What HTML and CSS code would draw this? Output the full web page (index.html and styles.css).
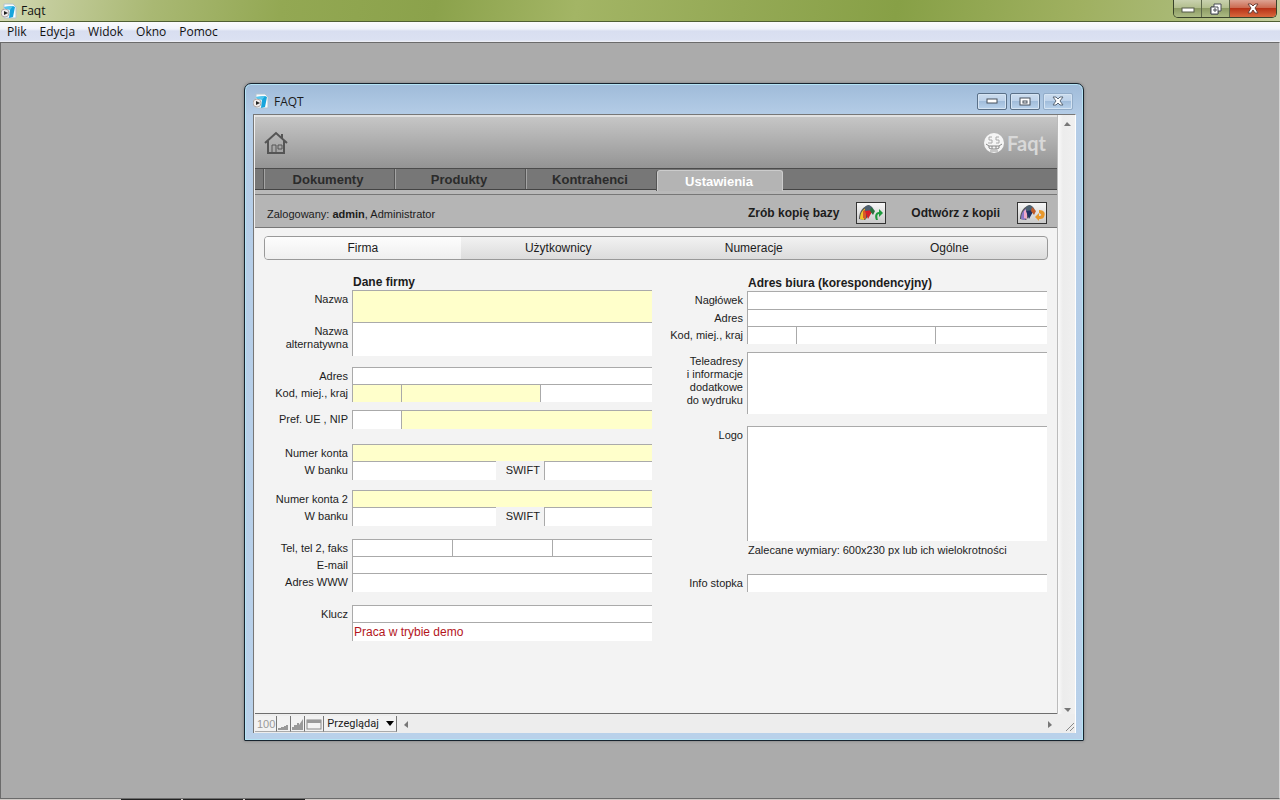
FILE: index.html
```
<!DOCTYPE html>
<html lang="pl">
<head>
    <meta charset="UTF-8">
    <meta name="viewport" content="width=device-width, initial-scale=1.0">
    <title>Faqt</title>
    <link rel="stylesheet" href="styles.css">
</head>
<body>

<svg class="defs" width="0" height="0" aria-hidden="true">
    <symbol id="app-icon" viewBox="0 0 16 16">
        <path d="M3 1h9l3 3v11H3z" fill="#fbfdfe" stroke="#b3c4cf"/>
        <path d="M3 4l9-1 2 1-2 10-4 1 1-9z" fill="#18a5dc"/>
        <path d="M3 4l9-1-3 4-5-1z" fill="#54c7ee"/>
        <circle cx="4" cy="10" r="4" fill="#f1eded" stroke="#b0a9a9"/>
        <path d="M3 8l4 2-4 2z" fill="#222"/>
    </symbol>
    <symbol id="umbrella" viewBox="0 0 28 20">
        <path d="M2 16C2 9 6 3 12 2c3 2 4 5 3 7L8 17z" fill="#555"/>
        <path d="M3 16C3 9 7 5 10 5L7 17z" fill="var(--side)"/>
        <path d="M6 8l3-2v10l-3-1z" fill="var(--mid)"/>
        <path d="M8 4c4-3 8-1 9 4H8z" fill="#4d6172"/>
        <path d="M8 8l8-1-5 9z" fill="var(--front)"/>
        <path d="M14 4l4 4-2 4-3-4z" fill="var(--tip)"/>
    </symbol>
</svg>

<header class="titlebar">
    <svg class="app-icon" width="16" height="16"><use href="#app-icon"/></svg>
    <span class="titlebar-text">Faqt</span>
    <div class="main-controls">
        <button class="main-min" aria-label="Minimalizuj"><svg width="14" height="6"><rect x="1" y="1" width="12" height="4" fill="#fff" stroke="#555b48"/></svg></button>
        <button class="main-max" aria-label="Przywróć"><svg width="12" height="12"><path d="M4 1h7v7H8v3H1V4h3z" fill="#fff" stroke="#4b4f56"/><path d="M1 4h7v7H1zM4 6h2v2H4z" fill="#fff" stroke="#4b4f56"/></svg></button>
        <button class="main-close" aria-label="Zamknij"><svg width="12" height="11"><path d="M1 1h3l2 2 2-2h3L8 5l3 5H8L6 7l-2 3H1l3-5z" fill="#fff" stroke="#6c4038"/></svg></button>
    </div>
</header>

<nav class="menubar">
    <button>Plik</button>
    <button>Edycja</button>
    <button>Widok</button>
    <button>Okno</button>
    <button>Pomoc</button>
</nav>

<main class="workspace">
    <section class="window">
        <header class="window-title">
            <svg class="app-icon" width="16" height="16"><use href="#app-icon"/></svg>
            <h1>FAQT</h1>
            <div class="window-controls">
                <button aria-label="Minimalizuj okno"><svg width="12" height="6"><rect x="1" y="1" width="10" height="4" fill="#fff" stroke="#47505c"/></svg></button>
                <button aria-label="Maksymalizuj okno"><svg width="12" height="9"><rect x="1" y="1" width="10" height="7" fill="#fff" stroke="#47505c"/><rect x="4" y="4" width="4" height="2" fill="#fff" stroke="#47505c"/></svg></button>
                <button class="dim" aria-label="Zamknij okno"><svg width="12" height="10"><path d="M1 1h3l2 2 2-2h3L8 5l3 4H8L6 7 4 9H1l3-4z" fill="#fff" stroke="#5b6878"/></svg></button>
            </div>
        </header>

        <div class="client">
            <div class="panel">
                <div class="banner">
                    <button class="home" aria-label="Start">
                        <svg width="24" height="24" viewBox="0 0 24 24" fill="none" stroke="#555" stroke-width="2">
                            <path d="M1 12L12 2l11 10M4 10v12h16V10M18 8V3"/>
                            <path d="M8 22v-8h4v8M14 14h4v4h-4z" stroke-width="1"/>
                        </svg>
                    </button>
                    <div class="brand">
                        <svg width="22" height="22" viewBox="0 0 22 22">
                            <circle cx="11" cy="11" r="10" fill="#f5f5f5"/>
                            <path d="M9 5H6v3h3v3H5M16 5h-3v3h3v3h-3" fill="none" stroke="#aaa"/>
                            <path d="M3 12l3 2h10l3-2M6 14v2l2 1h6l2-1v-2M9 14v3M13 14v3" fill="none" stroke="#888"/>
                            <path d="M7 19h8" stroke="#999"/>
                        </svg>
                        <span>Faqt</span>
                    </div>
                </div>

                <nav class="tabs">
                    <button>Dokumenty</button>
                    <button>Produkty</button>
                    <button>Kontrahenci</button>
                    <button class="active">Ustawienia</button>
                </nav>

                <div class="toolbar">
                    <p>Zalogowany: <b>admin</b>, Administrator</p>
                    <label for="backup">Zrób kopię bazy</label>
                    <button id="backup" class="tool backup">
                        <svg width="28" height="20" viewBox="0 0 28 20"><use href="#umbrella"/><path d="M19 17c-2-5 0-8 3-8V6l4 4-4 4v-3c-2 0-2 3-1 6z" fill="#1d9a3c"/></svg>
                    </button>
                    <label for="restore">Odtwórz z kopii</label>
                    <button id="restore" class="tool restore">
                        <svg width="28" height="20" viewBox="0 0 28 20"><use href="#umbrella"/><path d="M21 7c5 0 7 3 5 7-1 2-3 2-5 2v2l-4-4 4-4v3c3 0 3-2 0-3z" fill="#e8982c"/></svg>
                    </button>
                </div>

                <nav class="subtabs">
                    <button class="active">Firma</button>
                    <button>Użytkownicy</button>
                    <button>Numeracje</button>
                    <button>Ogólne</button>
                </nav>

                <form class="form">
                    <div class="company">
                        <h2>Dane firmy</h2>
                        <div class="group loose">
                            <div class="row tall">
                                <label for="name">Nazwa</label>
                                <textarea id="name" class="required"></textarea>
                            </div>
                            <div class="row tall">
                                <label for="alt-name">Nazwa<br>alternatywna</label>
                                <textarea id="alt-name"></textarea>
                            </div>
                        </div>
                        <div class="group near">
                            <div class="row">
                                <label for="address">Adres</label>
                                <input id="address" type="text">
                            </div>
                            <div class="row place">
                                <label for="zip">Kod, miej., kraj</label>
                                <input id="zip" type="text" class="required">
                                <input type="text" class="required" aria-label="Miejscowość">
                                <input type="text" aria-label="Kraj">
                            </div>
                        </div>
                        <div class="group far">
                            <div class="row nip">
                                <label for="prefix">Pref. UE , NIP</label>
                                <input id="prefix" type="text">
                                <input type="text" class="required" aria-label="NIP">
                            </div>
                        </div>
                        <div class="group">
                            <div class="row">
                                <label for="account">Numer konta</label>
                                <input id="account" type="text" class="required">
                            </div>
                            <div class="row bank">
                                <label for="bank">W banku</label>
                                <input id="bank" type="text">
                                <label for="swift">SWIFT</label>
                                <input id="swift" type="text">
                            </div>
                        </div>
                        <div class="group wide">
                            <div class="row">
                                <label for="account2">Numer konta 2</label>
                                <input id="account2" type="text" class="required">
                            </div>
                            <div class="row bank">
                                <label for="bank2">W banku</label>
                                <input id="bank2" type="text">
                                <label for="swift2">SWIFT</label>
                                <input id="swift2" type="text">
                            </div>
                        </div>
                        <div class="group wide">
                            <div class="row">
                                <label for="phone">Tel, tel 2, faks</label>
                                <input id="phone" type="text">
                                <input type="text" aria-label="Telefon 2">
                                <input type="text" aria-label="Faks">
                            </div>
                            <div class="row">
                                <label for="email">E-mail</label>
                                <input id="email" type="text">
                            </div>
                            <div class="row">
                                <label for="www">Adres WWW</label>
                                <input id="www" type="text">
                            </div>
                        </div>
                        <div class="group">
                            <div class="row">
                                <label for="key">Klucz</label>
                                <input id="key" type="text">
                            </div>
                            <div class="row">
                                <span class="row-label"></span>
                                <input type="text" class="demo" value="Praca w trybie demo" aria-label="Status klucza" readonly>
                            </div>
                        </div>
                    </div>

                    <div class="office">
                        <h2>Adres biura (korespondencyjny)</h2>
                        <div class="group near">
                            <div class="row first">
                                <label for="header">Nagłówek</label>
                                <input id="header" type="text">
                            </div>
                            <div class="row">
                                <label for="office-address">Adres</label>
                                <input id="office-address" type="text">
                            </div>
                            <div class="row place">
                                <label for="office-zip">Kod, miej., kraj</label>
                                <input id="office-zip" type="text">
                                <input type="text" aria-label="Miejscowość biura">
                                <input type="text" aria-label="Kraj biura">
                            </div>
                        </div>
                        <div class="group wide">
                            <div class="row contacts">
                                <label for="contacts">Teleadresy<br>i informacje<br>dodatkowe<br>do wydruku</label>
                                <textarea id="contacts"></textarea>
                            </div>
                        </div>
                        <div class="row">
                            <span class="row-label">Logo</span>
                            <div class="logo-box"></div>
                        </div>
                        <p class="hint">Zalecane wymiary: 600x230 px lub ich wielokrotności</p>
                        <div class="row first">
                            <label for="footer-info">Info stopka</label>
                            <input id="footer-info" type="text">
                        </div>
                    </div>
                </form>
            </div>

            <div class="scroll-v">
                <svg width="7" height="4"><path d="M0 4l3-4 4 4z" fill="#777"/></svg>
                <svg width="7" height="4"><path d="M0 0h7L4 4z" fill="#777"/></svg>
            </div>

            <footer class="status">
                <button class="zoom">100</button>
                <button aria-label="Pomniejsz"><svg width="11" height="10"><path d="M0 10V8h3V7h3V6h2V5h2v5z" fill="#999"/></svg></button>
                <button aria-label="Powiększ"><svg width="11" height="12"><path d="M0 12V9h2V7h3V5h2v2l4-6v11z" fill="#999"/></svg></button>
                <button aria-label="Pasek stanu"><svg width="16" height="11"><rect x="1" y="1" width="14" height="9" fill="#f3f3f3" stroke="#888"/><path d="M1 1h14v3H1z" fill="#999"/></svg></button>
                <button class="mode">Przeglądaj <svg width="8" height="5"><path d="M0 0h8L4 5z" fill="#000"/></svg></button>
                <div class="scroll-h">
                    <svg width="4" height="7"><path d="M4 0v7L0 4z" fill="#777"/></svg>
                    <svg width="4" height="7"><path d="M0 0v7l4-3z" fill="#777"/></svg>
                </div>
                <svg class="grip" width="10" height="10"><path d="M1 9l8-8M5 9l4-4" stroke="#888"/></svg>
            </footer>
        </div>
    </section>
</main>

<footer class="taskbar">
    <span></span><span></span><span></span>
</footer>

</body>
</html>
```
FILE: styles.css
```
* {
    box-sizing: border-box;
}
body {
    margin: 0;
    min-height: 100vh;
    display: flex;
    flex-direction: column;
    background: #ababab;
    color: #1c1c1c;
    font-family: "Liberation Sans", Arial, sans-serif;
    font-size: 11px;
}
button, input, textarea {
    font: inherit;
    color: inherit;
    margin: 0;
    padding: 0;
    border: 0;
    border-radius: 0;
    background: none;
}
svg {
    display: block;
    flex: none;
}
h1, h2, p {
    margin: 0;
}
.defs {
    position: absolute;
}

/* main window */
.titlebar {
    display: flex;
    align-items: center;
    height: 22px;
    padding-left: 1px;
    border-bottom: 1px solid #4f5f33;
    background: linear-gradient(100deg, #d3d9b4 0, #c3cc9b 4%, #a9b873 12%, #93a853 22%, #8ba24b 34%, #a3b565 45%, #94a955 58%, #87a046 70%, #9fb060 84%, #a9b975 92%, #c5cf9f 100%);
}
.titlebar-text {
    margin-left: 4px;
    color: #111;
    font: 12px "Open Sans", sans-serif;
}
.main-controls {
    display: flex;
    align-self: flex-start;
    height: 18px;
    margin-left: auto;
    margin-right: 3px;
    border: 1px solid #39422a;
    border-top: 0;
    border-radius: 0 0 5px 5px;
    overflow: hidden;
}
.main-controls button {
    display: flex;
    align-items: center;
    justify-content: center;
    width: 28px;
    border-right: 1px solid #5c6749;
    background: linear-gradient(#c9d2af 0, #b1bd8c 48%, #8d9c65 50%, #acba83 100%);
}
.main-controls .main-min {
    padding-top: 3px;
}
.main-controls .main-close {
    width: 46px;
    border-right: 0;
    background: linear-gradient(#dda393 0, #cc6b52 45%, #b83318 50%, #d9683c 100%);
}
.menubar {
    display: flex;
    height: 20px;
    padding-bottom: 2px;
    background: linear-gradient(#fafbfd 0, #f0f3fa 35%, #d8def0 45%, #dbe1f2 90%, #f2f2f6 100%);
}
.menubar button {
    padding: 0 6px 0 7px;
    color: #111;
    font: 12px "Open Sans", sans-serif;
}
.workspace {
    flex: 1;
    padding: 40px 195px 40px 243px;
    border: 1px solid #6b6b6b;
    border-right-color: #d5d5d5;
}
.taskbar {
    display: flex;
    gap: 2px;
    height: 1px;
    padding-left: 121px;
    background: #cfcac6;
}
.taskbar span {
    width: 60px;
    background: #222;
}

/* inner window */
.window {
    padding: 0 7px 7px 8px;
    border: 1px solid #17242f;
    border-radius: 7px 7px 1px 1px;
    background: linear-gradient(#9fbbd9 0, #b5cde7 32px, #b9d1ea 100%);
    box-shadow: inset 0 0 0 1px #b5e4f5, 0 0 3px rgba(0, 0, 0, 0.3);
}
.window-title {
    display: flex;
    align-items: center;
    height: 30px;
    padding-top: 4px;
}
.window-title h1 {
    margin-left: 5px;
    font: 12px "Open Sans", sans-serif;
}
.window-controls {
    display: flex;
    gap: 3px;
    margin-left: auto;
    margin-right: 3px;
}
.window-controls button {
    display: flex;
    align-items: center;
    justify-content: center;
    width: 30px;
    height: 17px;
    border: 1px solid #5a7088;
    border-radius: 2px;
    background: linear-gradient(#cbdcee 0, #bdd2ea 48%, #a1bddb 50%, #b9d2ec 100%);
    box-shadow: inset 0 0 0 1px #d5e4f3;
}
.window-controls .dim {
    border-color: #92acc8;
}
.client {
    display: grid;
    grid-template-columns: minmax(0, 1fr) 18px;
    padding-left: 1px;
    border: 1px solid #777;
    border-right-color: #fff;
    border-bottom: 0;
    background: #f0f0f0;
}
.panel {
    border-top: 2px solid #e2e2e2;
    border-bottom: 1px solid #6e6e6e;
    background: #f3f3f3;
}
.banner {
    display: flex;
    align-items: center;
    justify-content: space-between;
    height: 51px;
    padding: 0 11px 0 9px;
    background: linear-gradient(#c6c6c6, #949494);
}
.brand {
    display: flex;
    align-items: center;
    gap: 2px;
    color: #d8d8d8;
    font: bold 20px Lato, sans-serif;
}
.tabs {
    display: flex;
    height: 22px;
    padding-left: 9px;
    border-top: 1px solid #4c4c4c;
    border-bottom: 1px solid #444;
    background: #777;
}
.tabs button {
    width: 131px;
    padding-right: 4px;
    border-left: 1px solid #a4a4a4;
    box-shadow: -1px 0 0 #555;
    color: #2b2b2b;
    font-size: 13px;
    font-weight: bold;
}
.tabs .active {
    width: 126px;
    height: 21px;
    margin-top: 1px;
    padding-right: 2px;
    border: 1px solid #ccc;
    border-bottom: 0;
    border-radius: 3px 3px 0 0;
    background: #b4b4b4;
    color: #fff;
}
.toolbar {
    display: flex;
    align-items: center;
    height: 38px;
    padding: 8px 10px 0 12px;
    border-bottom: 1px solid #777;
    background: linear-gradient(#b9b9b9 4px, #777 4px, #777 5px, #b5b5b5 5px);
    font-size: 12px;
    font-weight: bold;
}
.toolbar p {
    margin-right: auto;
    padding-top: 3px;
    font-size: 11px;
    font-weight: normal;
}
.tool {
    width: 30px;
    height: 22px;
    margin: 0 25px 0 17px;
    border: 1px solid #333;
    background: linear-gradient(#f7f7f7, #c9c9c9);
}
.backup {
    --side: #f0c52e;
    --mid: #d85a28;
    --front: #d81e2a;
    --tip: #28723c;
}
.restore {
    --side: #8a78c8;
    --mid: #f0a8c8;
    --front: #1f3263;
    --tip: #c05a28;
    margin-right: 0;
}
.subtabs {
    display: grid;
    grid-template-columns: repeat(4, 1fr);
    height: 24px;
    margin: 8px 9px 15px;
    border: 1px solid #999;
    border-radius: 4px;
    overflow: hidden;
    background: linear-gradient(#f2f2f2, #dcdcdc);
    font-size: 12px;
}
.subtabs .active {
    background: linear-gradient(#fdfdfd, #efefef);
}

/* settings form */
.form {
    display: grid;
    grid-template-columns: minmax(0, 397fr) minmax(0, 395fr);
    padding: 0 10px 62px 0;
    line-height: 13px;
}
.company {
    --label: 97px;
}
.office {
    --label: 95px;
    padding-top: 1px;
}
.form h2 {
    margin-left: var(--label);
    padding-left: 1px;
    font-size: 12px;
    line-height: 15px;
}
.group {
    margin-bottom: 10px;
}
.group.near {
    margin-bottom: 8px;
}
.group.loose {
    margin-bottom: 11px;
}
.group.wide {
    margin-bottom: 13px;
}
.group.far {
    margin-bottom: 15px;
}
.office .group.wide {
    margin-bottom: 12px;
}
.row {
    display: flex;
}
.row label, .row-label {
    flex: none;
    width: var(--label);
    padding: 3px 4px 0 0;
    text-align: right;
}
.row input, .row textarea, .logo-box {
    flex: 1;
    min-width: 0;
    height: 17px;
    border-left: 1px solid #aaa;
    border-top: 1px solid #aaa;
    background: #fff;
    resize: none;
}
.group .row:last-child input {
    height: 19px;
}
.row.first input, .group .place:last-child input {
    height: 18px;
}
.row .required {
    background: #ffffcb;
}
.row.tall textarea {
    height: 32px;
}
.row.tall:last-child textarea {
    height: 34px;
}
.place input:nth-of-type(1) {
    flex: 48;
}
.place input:nth-of-type(2) {
    flex: 140;
}
.place input:nth-of-type(3) {
    flex: 112;
}
.nip input:nth-of-type(1) {
    flex: 48;
}
.nip input:nth-of-type(2) {
    flex: 252;
}
.bank input:nth-of-type(1) {
    flex: 144;
}
.bank input:nth-of-type(2) {
    flex: 108;
}
.bank label + input + label {
    width: 48px;
}
.row .demo {
    padding-left: 1px;
    color: #b3151c;
    font-size: 12px;
}
.row.contacts textarea {
    height: 62px;
}
.row .logo-box {
    height: 115px;
}
.hint {
    margin: 3px 0 17px var(--label);
    padding-left: 1px;
}

/* scroll bars and status strip */
.scroll-v {
    display: flex;
    flex-direction: column;
    align-items: center;
    justify-content: space-between;
    padding: 7px 0 2px 2px;
    border-left: 1px solid #bbb;
    background: linear-gradient(90deg, #fafafa, #ececec 5px, #f0f0f0);
}
.status {
    grid-column: 1 / -1;
    display: flex;
    height: 19px;
    padding: 2px 0 1px;
    background: #ededed;
}
.status button {
    display: flex;
    align-items: flex-end;
    padding: 0 1px 1px;
    border-right: 1px solid #777;
    border-bottom: 1px solid #aaa;
    background: #f2f2f2;
}
.status .zoom {
    align-items: center;
    padding: 0 1px 0 2px;
    color: #999;
    font-size: 11px;
}
.status .mode {
    align-items: center;
    gap: 7px;
    padding: 0 2px 0 3px;
    font: 11px Roboto, sans-serif;
}
.scroll-h {
    flex: 1;
    display: flex;
    align-items: center;
    justify-content: space-between;
    padding: 0 23px 0 7px;
}
.scroll-h + .grip {
    align-self: flex-end;
    margin-left: -10px;
}
```
